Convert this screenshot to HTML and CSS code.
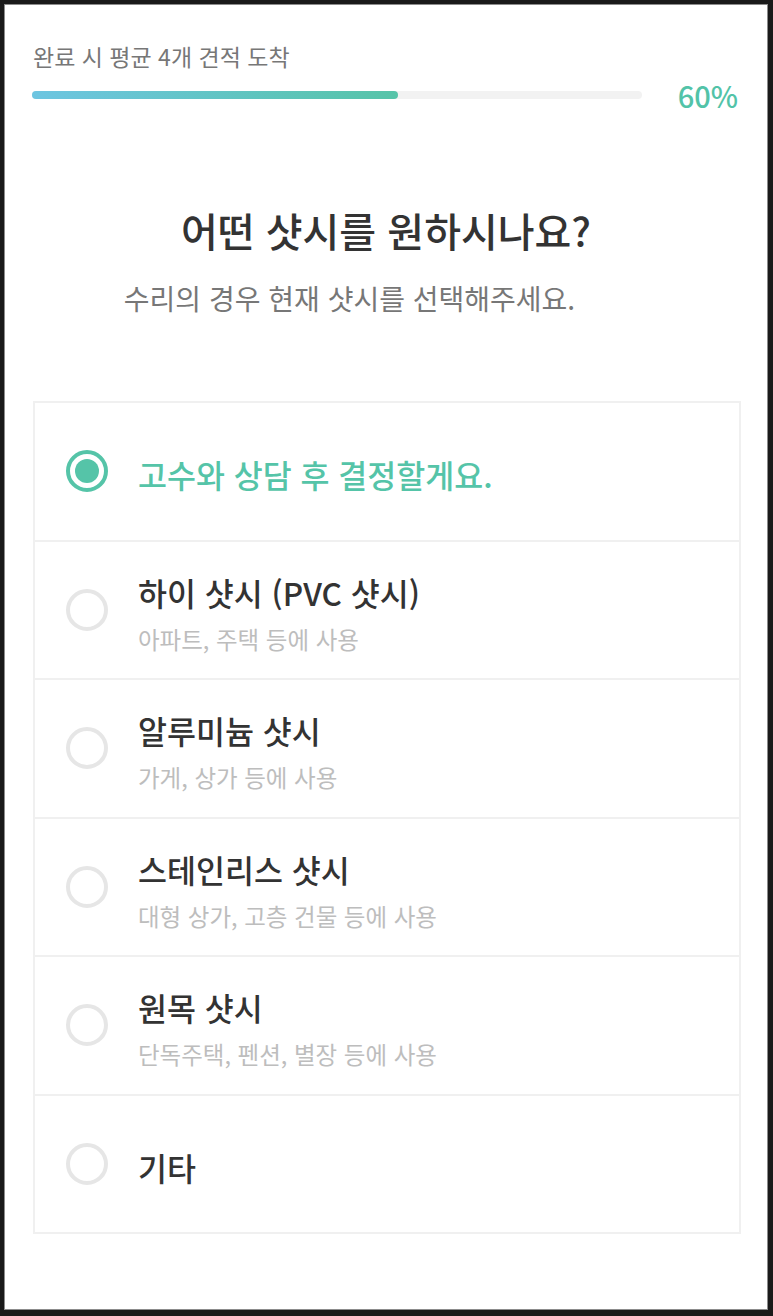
FILE: index.html
```html
<!DOCTYPE html>
<html lang="ko">
<head>
    <meta charset="UTF-8">
    <meta name="viewport" content="width=device-width, initial-scale=1.0">
    <title>샷시 선택</title>
    <link rel="stylesheet" href="styles.css">
</head>
<body>
    <div class="screen">
        <div class="progress">
            <div class="progress-label">완료 시 평균 4개 견적 도착</div>
            <div class="progress-row">
                <div class="track"><div class="fill" style="width: 60%"></div></div>
                <span class="percent">60%</span>
            </div>
        </div>

        <h2 class="question">어떤 샷시를 원하시나요?</h2>
        <p class="hint">수리의 경우 현재 샷시를 선택해주세요.</p>

        <div class="options">
            <div class="option selected">
                <span class="radio"></span>
                <div class="option-text">
                    <div class="option-title">고수와 상담 후 결정할게요.</div>
                </div>
            </div>
            <div class="option">
                <span class="radio"></span>
                <div class="option-text">
                    <div class="option-title">하이 샷시 (PVC 샷시)</div>
                    <div class="option-desc">아파트, 주택 등에 사용</div>
                </div>
            </div>
            <div class="option">
                <span class="radio"></span>
                <div class="option-text">
                    <div class="option-title">알루미늄 샷시</div>
                    <div class="option-desc">가게, 상가 등에 사용</div>
                </div>
            </div>
            <div class="option">
                <span class="radio"></span>
                <div class="option-text">
                    <div class="option-title">스테인리스 샷시</div>
                    <div class="option-desc">대형 상가, 고층 건물 등에 사용</div>
                </div>
            </div>
            <div class="option">
                <span class="radio"></span>
                <div class="option-text">
                    <div class="option-title">원목 샷시</div>
                    <div class="option-desc">단독주택, 펜션, 별장 등에 사용</div>
                </div>
            </div>
            <div class="option">
                <span class="radio"></span>
                <div class="option-text">
                    <div class="option-title">기타</div>
                </div>
            </div>
        </div>
    </div>
</body>
</html>
```

FILE: styles.css
```css
body {
    margin: 0;
    background: #1a1a1a;
    font-family: "Noto Sans CJK KR", "Noto Sans", sans-serif;
}
.screen {
    margin: 4px 5px 6px 4px;
    height: 1306px;
    box-sizing: border-box;
    border: 1px solid #8c8c8c;
    background: #ffffff;
    overflow: hidden;
}
.progress {
    padding: 36px 29px 0 27px;
}
.progress-label {
    font-size: 23px;
    line-height: 30px;
    color: #777777;
    padding-left: 1px;
}
.progress-row {
    display: flex;
    align-items: center;
    gap: 36px;
    height: 40px;
    margin-top: 4px;
}
.track {
    flex: 1;
    height: 8px;
    border-radius: 4px;
    background: #f2f2f2;
}
.fill {
    height: 100%;
    border-radius: 4px;
    background: linear-gradient(90deg, #6dc5e1, #56c4a8);
}
.percent {
    font-size: 29px;
    line-height: 40px;
    font-weight: 500;
    color: #52c3a8;
}
.question {
    margin: 90px 0 0;
    text-align: center;
    font-size: 40px;
    line-height: 50px;
    font-weight: 500;
    color: #333333;
}
.hint {
    margin: 25px 0 0;
    padding-right: 73px;
    text-align: center;
    font-size: 28px;
    line-height: 36px;
    color: #777777;
}
.options {
    margin: 85px 26px 0 28px;
    border: 2px solid #f0f0f0;
}
.option {
    display: flex;
    align-items: center;
    gap: 30px;
    height: 136.5px;
    padding-left: 31px;
    border-bottom: 2px solid #f0f0f0;
}
.option:last-child {
    border-bottom: none;
}
.radio {
    display: flex;
    align-items: center;
    justify-content: center;
    flex: none;
    width: 42px;
    height: 42px;
    box-sizing: border-box;
    border: 4px solid #e6e6e6;
    border-radius: 50%;
}
.selected .radio {
    border-color: #55c4a8;
}
.selected .radio::after {
    content: "";
    width: 24px;
    height: 24px;
    border-radius: 50%;
    background: #55c4a8;
}
.option-text {
    padding-top: 6px;
}
.option-title {
    font-size: 31.5px;
    line-height: 40px;
    font-weight: 500;
    color: #333333;
}
.selected .option-title {
    color: #55c4a8;
}
.option-desc {
    margin-top: 12px;
    font-size: 23.5px;
    line-height: 30px;
    color: #bdbdbd;
}
```
